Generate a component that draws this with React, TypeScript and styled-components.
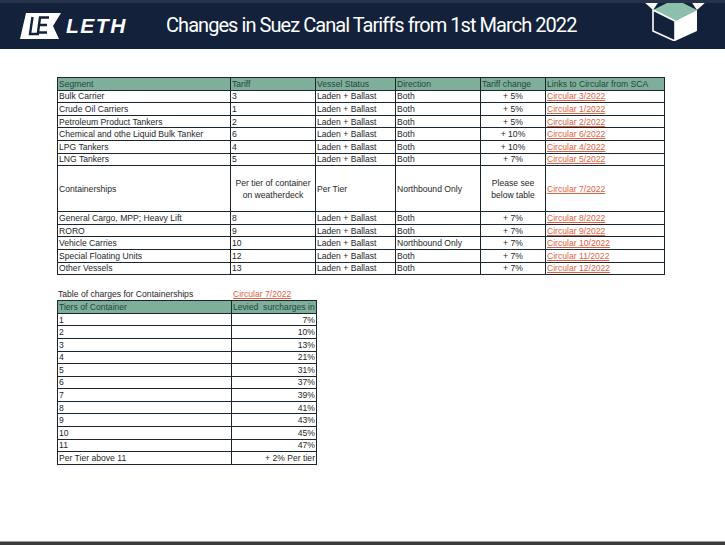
import React from 'react';
import styled, { createGlobalStyle } from 'styled-components';

const GlobalStyle = createGlobalStyle`
  html, body {
    margin: 0;
    padding: 0;
    background: #ffffff;
  }
  body {
    font-family: 'Liberation Sans', Arial, sans-serif;
  }
`;

const Page = styled.div`
  width: 725px;
  height: 545px;
  display: flex;
  flex-direction: column;
  overflow: hidden;
  background: #ffffff;
`;

const Header = styled.header`
  height: 46px;
  border-top: 3px solid #26334a;
  background: #13213b;
  display: flex;
  align-items: center;
  padding-left: 20px;
  overflow: hidden;
`;

const Logo = styled.div`
  display: flex;
  align-items: center;
  gap: 5px;
  width: 146px;
  margin-top: -1px;
`;

const LogoWord = styled.span`
  color: #ffffff;
  font-family: 'Liberation Sans', Arial, sans-serif;
  font-weight: 700;
  font-style: italic;
  font-size: 21px;
  letter-spacing: 1.5px;
`;

const Title = styled.h1`
  margin: 0 0 2px 0;
  color: #ffffff;
  font-family: Roboto, 'Liberation Sans', sans-serif;
  font-weight: 400;
  font-size: 20px;
  letter-spacing: -0.95px;
  flex: 1;
`;

const CubeWrap = styled.div`
  align-self: flex-start;
  margin-top: -3px;
  margin-right: 15px;
  height: 41px;
`;

const Main = styled.main`
  flex: 1;
  padding: 28px 0 0 57px;
  display: flex;
  flex-direction: column;
`;

const Footer = styled.footer`
  height: 3px;
  border-top: 1px solid #9a9a9a;
  background: #3b3b3b;
`;

const Table = styled.table<{ $width: number }>`
  border-collapse: collapse;
  table-layout: fixed;
  width: ${(p) => p.$width}px;
  font-family: 'Liberation Sans', Arial, sans-serif;
  font-size: 8.6px;
  color: #262626;
`;

const Col = styled.col<{ $w: number }>`
  width: ${(p) => p.$w}px;
`;

const HeadCell = styled.th`
  box-sizing: border-box;
  background: #7fae9b;
  color: #24463a;
  font-weight: 400;
  text-align: left;
  border: 1.5px solid #1a2532;
  height: 12.6px;
  padding: 0 1px;
  line-height: 10px;
  white-space: nowrap;
  overflow: hidden;
`;

const Cell = styled.td<{ $align?: 'left' | 'center' | 'right' }>`
  box-sizing: border-box;
  border: 1.5px solid #1a2532;
  height: 12.6px;
  padding: 0 1px;
  text-align: ${(p) => p.$align || 'left'};
  white-space: nowrap;
  overflow: hidden;
  line-height: 10px;
`;

const TallCell = styled(Cell)`
  height: 46px;
  white-space: normal;
  line-height: 12px;
`;

const Link = styled.a`
  color: #e0623f;
  text-decoration: underline;
`;

const CaptionRow = styled.div`
  display: flex;
  margin-top: 14px;
  font-size: 8.6px;
  color: #262626;
  height: 11px;
  line-height: 11px;
`;

const CaptionText = styled.span`
  width: 175px;
  padding-left: 1px;
`;

const LogoIcon = () => (
  <svg width="41" height="26" viewBox="0 0 41 26">
    <polygon points="6,0 41,0 33,13 39,26 0,26" fill="#ffffff" />
    <path d="M12.5 4 L10 21 L19 21" stroke="#13213b" strokeWidth="2.4" fill="none" />
    <path d="M29 4.5 L20 4.5 L18 19.5 L27 19.5 M19.2 12 L27 12" stroke="#13213b" strokeWidth="2.4" fill="none" />
  </svg>
);

const Cube = () => (
  <svg width="70" height="41" viewBox="0 0 70 41">
    <polygon points="13,10 35,-1 57,10 35,21" fill="#8cc0ad" />
    <polygon points="2,0 20,0 13,10" fill="#ffffff" />
    <polygon points="50,0 68,0 57,10" fill="#ffffff" />
    <polygon points="35,21 57,10 57,31 35,41" fill="#ffffff" />
    <polygon points="13,10 35,21 35,41 13,31" fill="#13213b" stroke="#ffffff" strokeWidth="1.6" strokeLinejoin="round" />
  </svg>
);

interface ITariffRow {
  segment: string;
  tariff: string;
  status: string;
  direction: string;
  change: string;
  link: string;
}

const rows: ITariffRow[] = [
  { segment: 'Bulk Carrier', tariff: '3', status: 'Laden + Ballast', direction: 'Both', change: '+ 5%', link: 'Circular 3/2022' },
  { segment: 'Crude Oil Carriers', tariff: '1', status: 'Laden + Ballast', direction: 'Both', change: '+ 5%', link: 'Circular 1/2022' },
  { segment: 'Petroleum Product Tankers', tariff: '2', status: 'Laden + Ballast', direction: 'Both', change: '+ 5%', link: 'Circular 2/2022' },
  { segment: 'Chemical and othe Liquid Bulk Tanker', tariff: '6', status: 'Laden + Ballast', direction: 'Both', change: '+ 10%', link: 'Circular 6/2022' },
  { segment: 'LPG Tankers', tariff: '4', status: 'Laden + Ballast', direction: 'Both', change: '+ 10%', link: 'Circular 4/2022' },
  { segment: 'LNG Tankers', tariff: '5', status: 'Laden + Ballast', direction: 'Both', change: '+ 7%', link: 'Circular 5/2022' },
];

const rowsAfter: ITariffRow[] = [
  { segment: 'General Cargo, MPP; Heavy Lift', tariff: '8', status: 'Laden + Ballast', direction: 'Both', change: '+ 7%', link: 'Circular 8/2022' },
  { segment: 'RORO', tariff: '9', status: 'Laden + Ballast', direction: 'Both', change: '+ 7%', link: 'Circular 9/2022' },
  { segment: 'Vehicle Carries', tariff: '10', status: 'Laden + Ballast', direction: 'Northbound Only', change: '+ 7%', link: 'Circular 10/2022' },
  { segment: 'Special Floating Units', tariff: '12', status: 'Laden + Ballast', direction: 'Both', change: '+ 7%', link: 'Circular 11/2022' },
  { segment: 'Other Vessels', tariff: '13', status: 'Laden + Ballast', direction: 'Both', change: '+ 7%', link: 'Circular 12/2022' },
];

const tiers: [string, string][] = [
  ['1', '7%'],
  ['2', '10%'],
  ['3', '13%'],
  ['4', '21%'],
  ['5', '31%'],
  ['6', '37%'],
  ['7', '39%'],
  ['8', '41%'],
  ['9', '43%'],
  ['10', '45%'],
  ['11', '47%'],
  ['Per Tier above 11', '+ 2% Per tier'],
];

const TariffRow = ({ row }: { row: ITariffRow }) => (
  <tr>
    <Cell>{row.segment}</Cell>
    <Cell>{row.tariff}</Cell>
    <Cell>{row.status}</Cell>
    <Cell>{row.direction}</Cell>
    <Cell $align="center">{row.change}</Cell>
    <Cell>
      <Link>{row.link}</Link>
    </Cell>
  </tr>
);

const App = () => {
  return (
    <Page>
      <GlobalStyle />
      <Header>
        <Logo>
          <LogoIcon />
          <LogoWord>LETH</LogoWord>
        </Logo>
        <Title>Changes in Suez Canal Tariffs from 1st March 2022</Title>
        <CubeWrap>
          <Cube />
        </CubeWrap>
      </Header>
      <Main>
        <Table $width={607}>
          <colgroup>
            <Col $w={173} />
            <Col $w={85} />
            <Col $w={80} />
            <Col $w={85} />
            <Col $w={65} />
            <Col $w={119} />
          </colgroup>
          <thead>
            <tr>
              <HeadCell>Segment</HeadCell>
              <HeadCell>Tariff</HeadCell>
              <HeadCell>Vessel Status</HeadCell>
              <HeadCell>Direction</HeadCell>
              <HeadCell>Tariff change</HeadCell>
              <HeadCell>Links to Circular from SCA</HeadCell>
            </tr>
          </thead>
          <tbody>
            {rows.map((r) => (
              <TariffRow key={r.segment} row={r} />
            ))}
            <tr>
              <TallCell>Containerships</TallCell>
              <TallCell $align="center">Per tier of container on weatherdeck</TallCell>
              <TallCell>Per Tier</TallCell>
              <TallCell>Northbound Only</TallCell>
              <TallCell $align="center">Please see below table</TallCell>
              <TallCell>
                <Link>Circular 7/2022</Link>
              </TallCell>
            </tr>
            {rowsAfter.map((r) => (
              <TariffRow key={r.segment} row={r} />
            ))}
          </tbody>
        </Table>

        <CaptionRow>
          <CaptionText>Table of charges for Containerships</CaptionText>
          <Link>Circular 7/2022</Link>
        </CaptionRow>

        <Table $width={259}>
          <colgroup>
            <Col $w={174} />
            <Col $w={85} />
          </colgroup>
          <thead>
            <tr>
              <HeadCell>Tiers of Container</HeadCell>
              <HeadCell>Levied&nbsp; surcharges in</HeadCell>
            </tr>
          </thead>
          <tbody>
            {tiers.map(([tier, value]) => (
              <tr key={tier}>
                <Cell>{tier}</Cell>
                <Cell $align="right">{value}</Cell>
              </tr>
            ))}
          </tbody>
        </Table>
      </Main>
      <Footer />
    </Page>
  );
};

export default App;
